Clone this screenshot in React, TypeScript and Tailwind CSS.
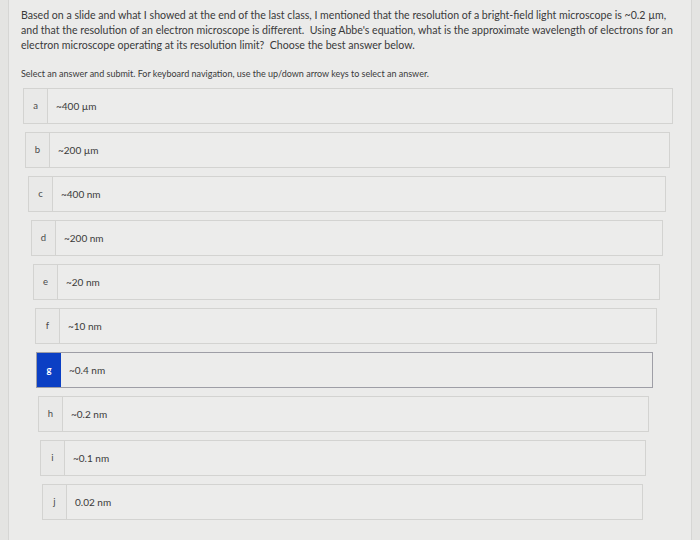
import React from "react";

const options = [
  { l: "a", t: "~400 µm", cls: "ml-[22px] w-[650px]" },
  { l: "b", t: "~200 µm", cls: "ml-[24px] w-[645px]" },
  { l: "c", t: "~400 nm", cls: "ml-[27px] w-[638px]" },
  { l: "d", t: "~200 nm", cls: "ml-[30px] w-[632px]" },
  { l: "e", t: "~20 nm", cls: "ml-[32px] w-[627px]" },
  { l: "f", t: "~10 nm", cls: "ml-[34px] w-[622px]" },
  { l: "g", t: "~0.4 nm", cls: "ml-[35px] w-[617px]", sel: true },
  { l: "h", t: "~0.2 nm", cls: "ml-[37px] w-[611px]" },
  { l: "i", t: "~0.1 nm", cls: "ml-[39px] w-[606px]" },
  { l: "j", t: "0.02 nm", cls: "ml-[41px] w-[601px]" },
];

export default function App() {
  return (
    <div
      className="w-[700px] h-[540px] bg-[#e4e4e2] overflow-hidden"
      style={{ fontFamily: 'Lato, "Noto Sans", sans-serif' }}
    >
      <div className="ml-[8px] w-[684px] h-full bg-[#ebebea] border-l border-r border-[#d6d6d4]">
        <div className="pl-[12px] pr-[4px] pt-[8px] text-[10.6px] leading-[15px] text-[#3a3a3a] whitespace-nowrap">
          Based on a slide and what I showed at the end of the last class, I mentioned that the resolution of a bright-field light microscope is ~0.2 µm,
          <br />
          and that the resolution of an electron microscope is different.&nbsp; Using Abbe's equation, what is the approximate wavelength of electrons for an
          <br />
          electron microscope operating at its resolution limit?&nbsp; Choose the best answer below.
        </div>
        <div className="pl-[12px] mt-[15px] text-[9px] leading-[12px] text-[#3a3a3a]">
          Select an answer and submit. For keyboard navigation, use the up/down arrow keys to select an answer.
        </div>
        <div className="mt-[8px] flex flex-col gap-[8px] -ml-[8px]">
          {options.map((o) => (
            <div
              key={o.l}
              className={`${o.cls} h-[36px] flex items-stretch bg-[#ececeb] border ${
                o.sel ? "border-[#9e9ea6]" : "border-[#d3d3d1]"
              }`}
            >
              <div
                className={`w-[24px] flex items-center justify-center text-[9.5px] ${
                  o.sel
                    ? "bg-[#0b3fc4] text-white font-bold"
                    : "bg-[#e9e9e8] text-[#4a4a4a] border-r border-[#d3d3d1]"
                }`}
              >
                {o.l}
              </div>
              <div className="flex items-center pl-[8px] text-[10px] text-[#3a3a3a]">
                {o.t}
              </div>
            </div>
          ))}
        </div>
      </div>
    </div>
  );
}
